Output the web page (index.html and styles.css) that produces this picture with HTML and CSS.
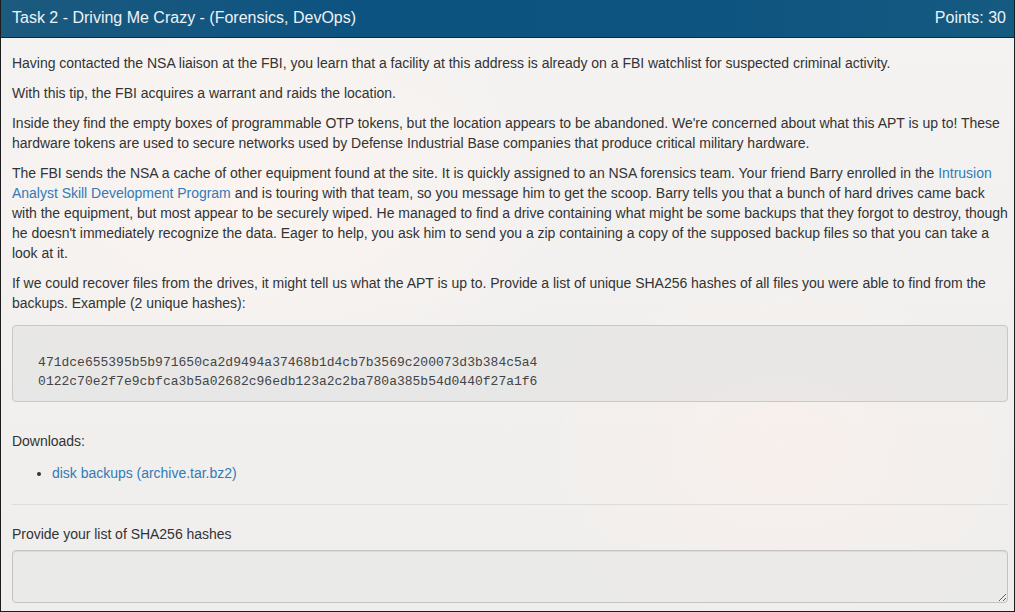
FILE: index.html
```html
<!DOCTYPE html>
<html>
<head>
<meta charset="utf-8">
<link rel="stylesheet" href="styles.css">
</head>
<body>
<div class="panel">
  <div class="panel-heading">
    <span class="title">Task 2 - Driving Me Crazy - (Forensics, DevOps)</span>
    <span class="points">Points: 30</span>
  </div>
  <div class="panel-body">
    <p>Having contacted the NSA liaison at the FBI, you learn that a facility at this address is already on a FBI watchlist for suspected criminal activity.</p>
    <p>With this tip, the FBI acquires a warrant and raids the location.</p>
    <p>Inside they find the empty boxes of programmable OTP tokens, but the location appears to be abandoned. We're concerned about what this APT is up to! These hardware tokens are used to secure networks used by Defense Industrial Base companies that produce critical military hardware.</p>
    <p>The FBI sends the NSA a cache of other equipment found at the site. It is quickly assigned to an NSA forensics team. Your friend Barry enrolled in the <a href="#">Intrusion Analyst Skill Development Program</a> and is touring with that team, so you message him to get the scoop. Barry tells you that a bunch of hard drives came back with the equipment, but most appear to be securely wiped. He managed to find a drive containing what might be some backups that they forgot to destroy, though he doesn't immediately recognize the data. Eager to help, you ask him to send you a zip containing a copy of the supposed backup files so that you can take a look at it.</p>
    <p>If we could recover files from the drives, it might tell us what the APT is up to. Provide a list of unique SHA256 hashes of all files you were able to find from the backups. Example (2 unique hashes):</p>
<pre>

  471dce655395b5b971650ca2d9494a37468b1d4cb7b3569c200073d3b384c5a4
  0122c70e2f7e9cbfca3b5a02682c96edb123a2c2ba780a385b54d0440f27a1f6</pre>
    <p class="downloads">Downloads:</p>
    <ul class="dl-list">
      <li><a href="#">disk backups (archive.tar.bz2)</a></li>
    </ul>
    <hr>
    <label class="answer-label">Provide your list of SHA256 hashes</label>
    <textarea class="answer"></textarea>
  </div>
</div>
</body>
</html>
```
FILE: styles.css
```css
html, body {
  margin: 0;
  padding: 0;
  height: 100%;
}
body {
  font-family: "Liberation Sans", Arial, sans-serif;
  font-size: 14px;
  line-height: 20px;
  color: #333;
  background: #f2f1f0;
  overflow: hidden;
}
.panel {
  box-sizing: border-box;
  height: 612px;
  border: 1px solid #1c1c1c;
  border-top: none;
  background:
    radial-gradient(ellipse 500px 300px at 250px 200px, rgba(255,245,240,0.7), rgba(255,255,255,0) 70%),
    radial-gradient(ellipse 400px 300px at 780px 450px, rgba(255,240,235,0.5), rgba(255,255,255,0) 70%),
    linear-gradient(180deg, #f4f3f2 0%, #efeeed 100%);
}
.panel-heading {
  height: 38px;
  box-sizing: border-box;
  border-bottom: 1px solid #0a2a3e;
  background: linear-gradient(90deg, #1c5a7e 0%, #0d5381 35%, #0e5480 70%, #155a80 100%);
  color: #eef2f5;
  font-size: 16px;
  display: flex;
  justify-content: space-between;
  align-items: center;
  padding: 0 8px 1px 11px;
}
.panel-body {
  padding: 15px 6px 0 11px;
  letter-spacing: -0.02px;
}
p {
  margin: 0 0 10px;
}
a {
  color: #337ab7;
  text-decoration: none;
}
pre {
  font-family: "Liberation Mono", "Courier New", monospace;
  font-size: 13px;
  line-height: 18.57px;
  letter-spacing: 0;
  color: #444;
  margin: 12px 0 10px;
  padding: 9.5px;
  background: rgba(220, 220, 220, 0.45);
  border: 1px solid #c8c8c8;
  border-radius: 4px;
}
.downloads {
  margin-top: 29px;
}
.dl-list {
  margin: 0 0 10px;
  padding: 2px 0 0 40px;
}
hr {
  border: 0;
  border-top: 1px solid #dcdcdc;
  margin: 21px 0 19px;
}
.answer-label {
  display: block;
  margin-bottom: 6px;
}
.answer {
  display: block;
  box-sizing: border-box;
  width: 100%;
  height: 53px;
  border: 1px solid #c4c4c4;
  border-radius: 4px;
  background: rgba(230, 230, 230, 0.5);
  box-shadow: inset 0 1px 1px rgba(0,0,0,0.075);
  font-family: "Liberation Sans", Arial, sans-serif;
  font-size: 14px;
}
```
